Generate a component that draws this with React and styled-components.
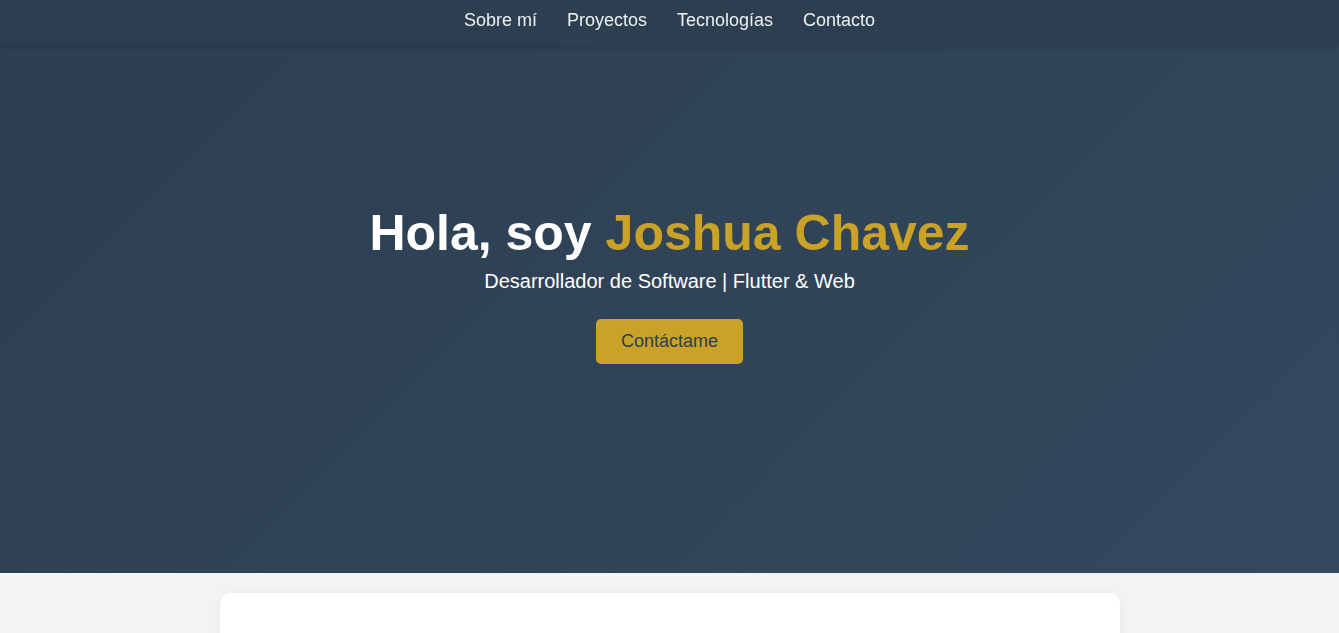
import styled, { createGlobalStyle } from "styled-components";

const Global = createGlobalStyle`
    * { box-sizing: border-box; }
    body {
        margin: 0;
        font-family: "Liberation Sans", Arial, sans-serif;
        background-color: #f3f3f3;
        color: #333;
    }
`;

const Nav = styled.nav`
    position: fixed;
    top: 0;
    left: 0;
    right: 0;
    height: 45px;
    padding-top: 9px;
    display: flex;
    justify-content: center;
    gap: 30px;
    background-color: #2c3e50;
    box-shadow: 0 2px 6px rgba(0,0,0,0.15);
    z-index: 10;
`;

const NavLink = styled.a`
    color: #ecf0f1;
    font-size: 18px;
    line-height: 22px;
    text-decoration: none;
    cursor: pointer;
`;

const Hero = styled.header`
    height: 573px;
    display: flex;
    flex-direction: column;
    align-items: center;
    justify-content: center;
    text-align: center;
    background: linear-gradient(135deg, #2c3e50, #34495e);
    color: #ffffff;
    padding-bottom: 6px;
`;

const Titulo = styled.h1`
    margin: 0;
    font-size: 50px;
    line-height: 60px;
    font-weight: bold;
`;

const Nombre = styled.span`
    color: #c9a227;
`;

const Subtitulo = styled.p`
    margin: 6px 0 26px;
    font-size: 20px;
    line-height: 24px;
`;

const Boton = styled.a`
    display: inline-block;
    background-color: #c9a227;
    color: #2c3e50;
    font-size: 18px;
    line-height: 21px;
    padding: 12px 25px;
    border-radius: 5px;
    text-decoration: none;
    cursor: pointer;
`;

const Main = styled.main`
    padding: 20px 0;
`;

const Tarjeta = styled.section`
    width: 900px;
    min-height: 300px;
    margin: 0 auto;
    background-color: #ffffff;
    border-radius: 10px;
    box-shadow: 0 2px 10px rgba(0,0,0,0.06);
`;

const links = ["Sobre mí", "Proyectos", "Tecnologías", "Contacto"];

const App = () => {
    return (
        <>
            <Global />
            <Nav>
                {links.map((l) => <NavLink key={l}>{l}</NavLink>)}
            </Nav>
            <Hero>
                <Titulo>Hola, soy <Nombre>Joshua Chavez</Nombre></Titulo>
                <Subtitulo>Desarrollador de Software | Flutter &amp; Web</Subtitulo>
                <Boton>Contáctame</Boton>
            </Hero>
            <Main>
                <Tarjeta />
            </Main>
        </>
    );
};

export default App;
